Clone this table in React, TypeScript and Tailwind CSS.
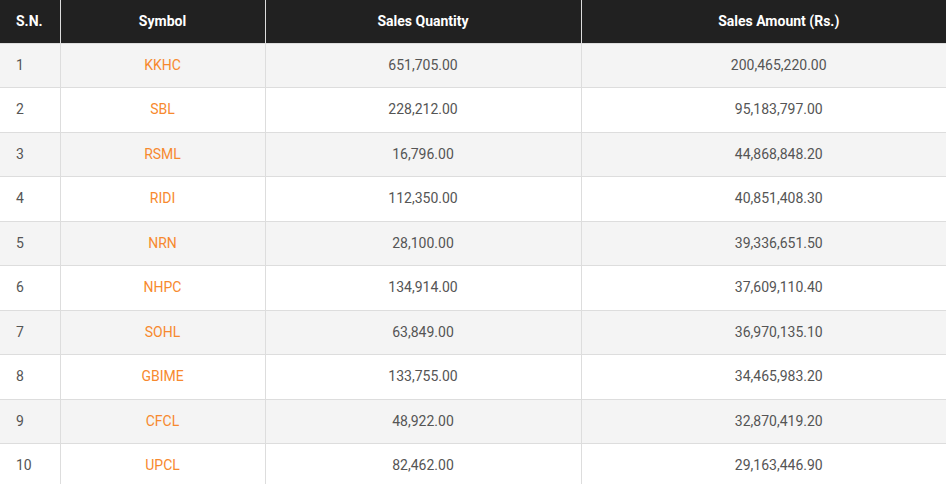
const rows = [
  ["1", "KKHC", "651,705.00", "200,465,220.00"],
  ["2", "SBL", "228,212.00", "95,183,797.00"],
  ["3", "RSML", "16,796.00", "44,868,848.20"],
  ["4", "RIDI", "112,350.00", "40,851,408.30"],
  ["5", "NRN", "28,100.00", "39,336,651.50"],
  ["6", "NHPC", "134,914.00", "37,609,110.40"],
  ["7", "SOHL", "63,849.00", "36,970,135.10"],
  ["8", "GBIME", "133,755.00", "34,465,983.20"],
  ["9", "CFCL", "48,922.00", "32,870,419.20"],
  ["10", "UPCL", "82,462.00", "29,163,446.90"],
]

export default function App() {
  return (
    <div className="w-[946px] overflow-hidden bg-white font-['Roboto',sans-serif]">
      <table className="w-[976px] table-fixed border-collapse text-[14px]">
        <colgroup>
          <col className="w-[60px]" />
          <col className="w-[205px]" />
          <col className="w-[316px]" />
          <col />
        </colgroup>
        <thead>
          <tr className="h-[43px] bg-[#212121] text-white text-[14px] font-bold">
            <th className="border-r border-b border-[#dddddd] px-4 text-left">S.N.</th>
            <th className="border-x border-b border-[#dddddd]">Symbol</th>
            <th className="border-x border-b border-[#dddddd]">Sales Quantity</th>
            <th className="border-l border-b border-[#dddddd]">Sales Amount (Rs.)</th>
          </tr>
        </thead>
        <tbody>
          {rows.map((r, i) => (
            <tr key={r[0]} className={`h-[44.5px] text-[#555555] ${i % 2 === 0 ? "bg-[#f4f4f4]" : "bg-white"}`}>
              <td className="border-r border-b border-[#dddddd] px-4">{r[0]}</td>
              <td className="border-x border-b border-[#dddddd] text-center text-[#f7892e]">{r[1]}</td>
              <td className="border-x border-b border-[#dddddd] text-center">{r[2]}</td>
              <td className="border-l border-b border-[#dddddd] text-center">{r[3]}</td>
            </tr>
          ))}
        </tbody>
      </table>
    </div>
  )
}
